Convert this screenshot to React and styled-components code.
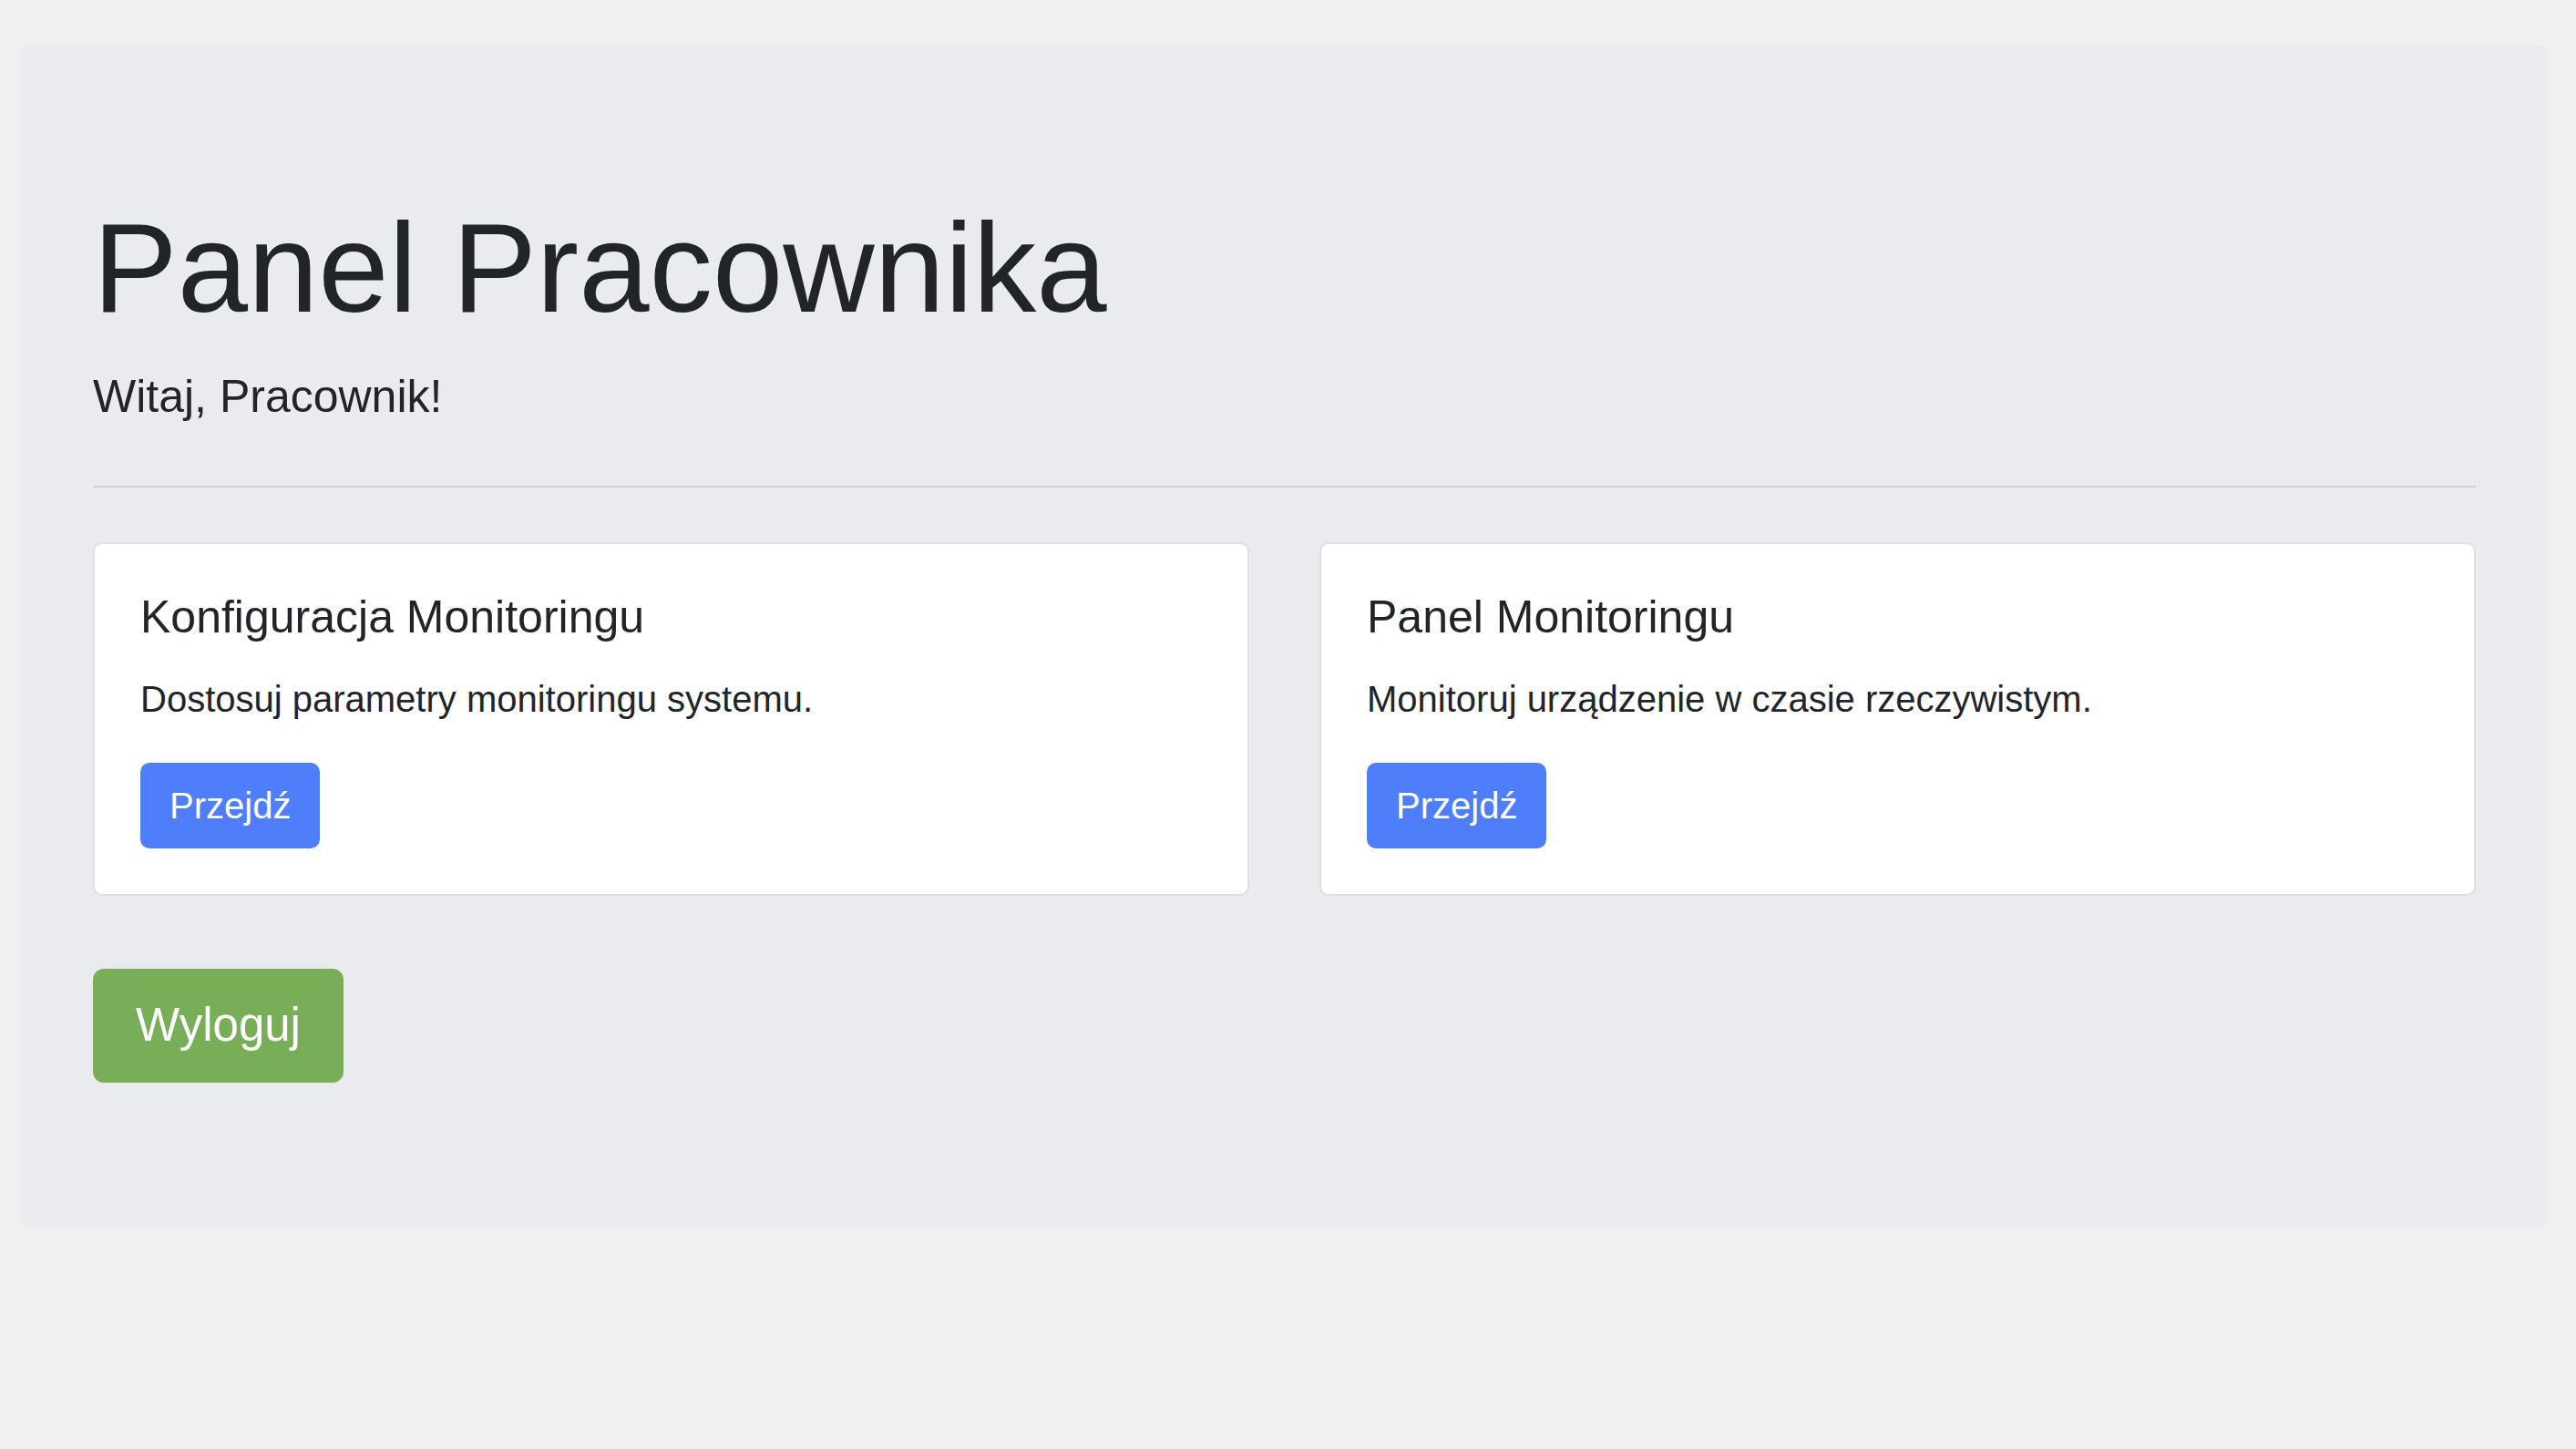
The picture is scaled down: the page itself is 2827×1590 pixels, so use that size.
import React from "react";
import styled, { createGlobalStyle } from "styled-components";

const GlobalStyle = createGlobalStyle`
  html, body {
    margin: 0;
    padding: 0;
    background: #f0f0f0;
  }
  body {
    font-family: "Liberation Sans", Arial, sans-serif;
    font-size: 40px;
    line-height: 1.5;
    color: #212529;
  }
`;

const Page = styled.div`
  padding: 50px 30px 0 22px;
  min-height: 1590px;
  box-sizing: border-box;
`;

const Jumbotron = styled.div`
  background: #eaebef;
  border-radius: 12px;
  padding: 160px 80px;
`;

const Title = styled.h1`
  font-size: 139px;
  font-weight: 300;
  line-height: 1.21;
  margin: 0 0 20px;
`;

const Lead = styled.p`
  font-size: 50px;
  font-weight: 300;
  line-height: 1.5;
  margin: 0;
`;

const Divider = styled.hr`
  margin: 60px 0;
  border: 0;
  border-top: 2.5px solid rgba(0, 0, 0, 0.1);
  height: 0;
`;

const CardRow = styled.div`
  display: grid;
  grid-template-columns: 1fr 1fr;
  gap: 77px;
  margin-bottom: 80px;
`;

const Card = styled.div`
  background: #fff;
  border: 2.5px solid rgba(0, 0, 0, 0.125);
  border-radius: 10px;
  padding: 50px;
`;

const CardTitle = styled.h5`
  font-size: 50px;
  font-weight: 500;
  line-height: 1.2;
  margin: 0 0 30px;
`;

const CardText = styled.p`
  font-size: 40px;
  line-height: 1.5;
  margin: 0 0 40px;
`;

const Button = styled.button`
  display: inline-block;
  font-family: inherit;
  color: #fff;
  background: ${(p) => (p.$variant === "success" ? "#77ae57" : "#4f7efa")};
  border: 2.5px solid ${(p) => (p.$variant === "success" ? "#77ae57" : "#4f7efa")};
  font-size: ${(p) => (p.$large ? "51px" : "40px")};
  line-height: 1.5;
  padding: ${(p) => (p.$large ? "22px 45px" : "15px 30px")};
  border-radius: ${(p) => (p.$large ? "12px" : "10px")};
  cursor: pointer;
`;

const cards = [
  {
    title: "Konfiguracja Monitoringu",
    text: "Dostosuj parametry monitoringu systemu.",
  },
  {
    title: "Panel Monitoringu",
    text: "Monitoruj urządzenie w czasie rzeczywistym.",
  },
];

export default function App() {
  return (
    <>
      <GlobalStyle />
      <Page>
        <Jumbotron>
          <Title>Panel Pracownika</Title>
          <Lead>Witaj, Pracownik!</Lead>
          <Divider />
          <CardRow>
            {cards.map((c) => (
              <Card key={c.title}>
                <CardTitle>{c.title}</CardTitle>
                <CardText>{c.text}</CardText>
                <Button>Przejdź</Button>
              </Card>
            ))}
          </CardRow>
          <Button $variant="success" $large>
            Wyloguj
          </Button>
        </Jumbotron>
      </Page>
    </>
  );
}
